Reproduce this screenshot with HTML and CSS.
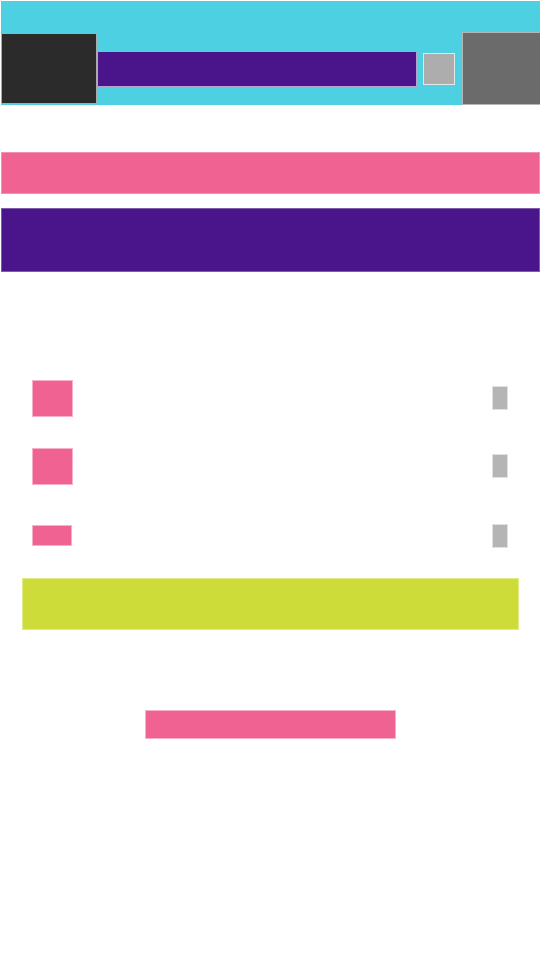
FILE: index.html
```html
<!DOCTYPE html>
<html>
<head>
<meta charset="utf-8">
<link rel="stylesheet" href="styles.css">
</head>
<body>
<div class="page">
  <header class="header">
    <div class="logo"></div>
    <div class="search"></div>
    <div class="search-btn"></div>
    <div class="avatar"></div>
  </header>
  <div class="banner"></div>
  <div class="hero"></div>
  <ul class="list">
    <li class="row"><span class="thumb"></span><span class="chev"></span></li>
    <li class="row"><span class="thumb"></span><span class="chev"></span></li>
    <li class="row"><span class="thumb small"></span><span class="chev"></span></li>
  </ul>
  <div class="cta"></div>
  <div class="btn-wrap"><div class="btn"></div></div>
</div>
</body>
</html>
```
FILE: styles.css
```css
html, body { margin: 0; padding: 0; background: #fff; font-family: "Liberation Sans", sans-serif; }
.page { padding: 1px 0 0 1px; }
.header {
  background: #4dd0e1;
  height: 73px;
  padding-top: 31px;
  display: flex;
  align-items: center;
  box-sizing: content-box;
}
.logo { width: 96px; height: 71px; background: #2b2b2b; border: 1px solid rgba(255,255,255,0.6); box-sizing: border-box; }
.search { width: 320px; height: 36px; background: #4a148a; border: 1px solid rgba(255,255,255,0.6); box-sizing: border-box; }
.search-btn { width: 32px; height: 32px; margin-left: 6px; background: #adadad; border: 1px solid rgba(255,255,255,0.7); box-sizing: border-box; }
.avatar { width: 78px; height: 73px; margin-left: auto; background: #6b6b6b; border: 1px solid rgba(255,255,255,0.5); border-right: 0; box-sizing: border-box; }
.banner { height: 42px; margin-top: 47px; background: #f06292; border: 1px solid rgba(255,255,255,0.3); box-sizing: border-box; }
.hero { height: 64px; margin-top: 14px; background: #4a148a; border: 1px solid rgba(255,255,255,0.3); box-sizing: border-box; }
.list { list-style: none; margin: 92px 0 0 -1px; padding: 0 32px; }
.row { height: 68px; display: flex; align-items: center; justify-content: space-between; }
.thumb { width: 41px; height: 37px; background: #f06292; border: 1px solid rgba(255,255,255,0.5); box-sizing: border-box; }
.thumb.small { width: 40px; height: 21px; }
.chev { width: 16px; height: 24px; background: #b5b5b5; border: 1px solid rgba(255,255,255,0.6); box-sizing: border-box; }
.row:last-child .thumb, .row:last-child .chev { margin-top: 3px; }
.cta { width: 497px; height: 52px; margin: 10px 0 0 21px; background: #cddc39; border: 1px solid rgba(255,255,255,0.4); box-sizing: border-box; }
.btn-wrap { display: flex; justify-content: center; margin: 80px 0 0 -1px; }
.btn { width: 251px; height: 29px; margin-left: 1px; background: #f06292; border: 1px solid rgba(255,255,255,0.5); box-sizing: border-box; }
```
